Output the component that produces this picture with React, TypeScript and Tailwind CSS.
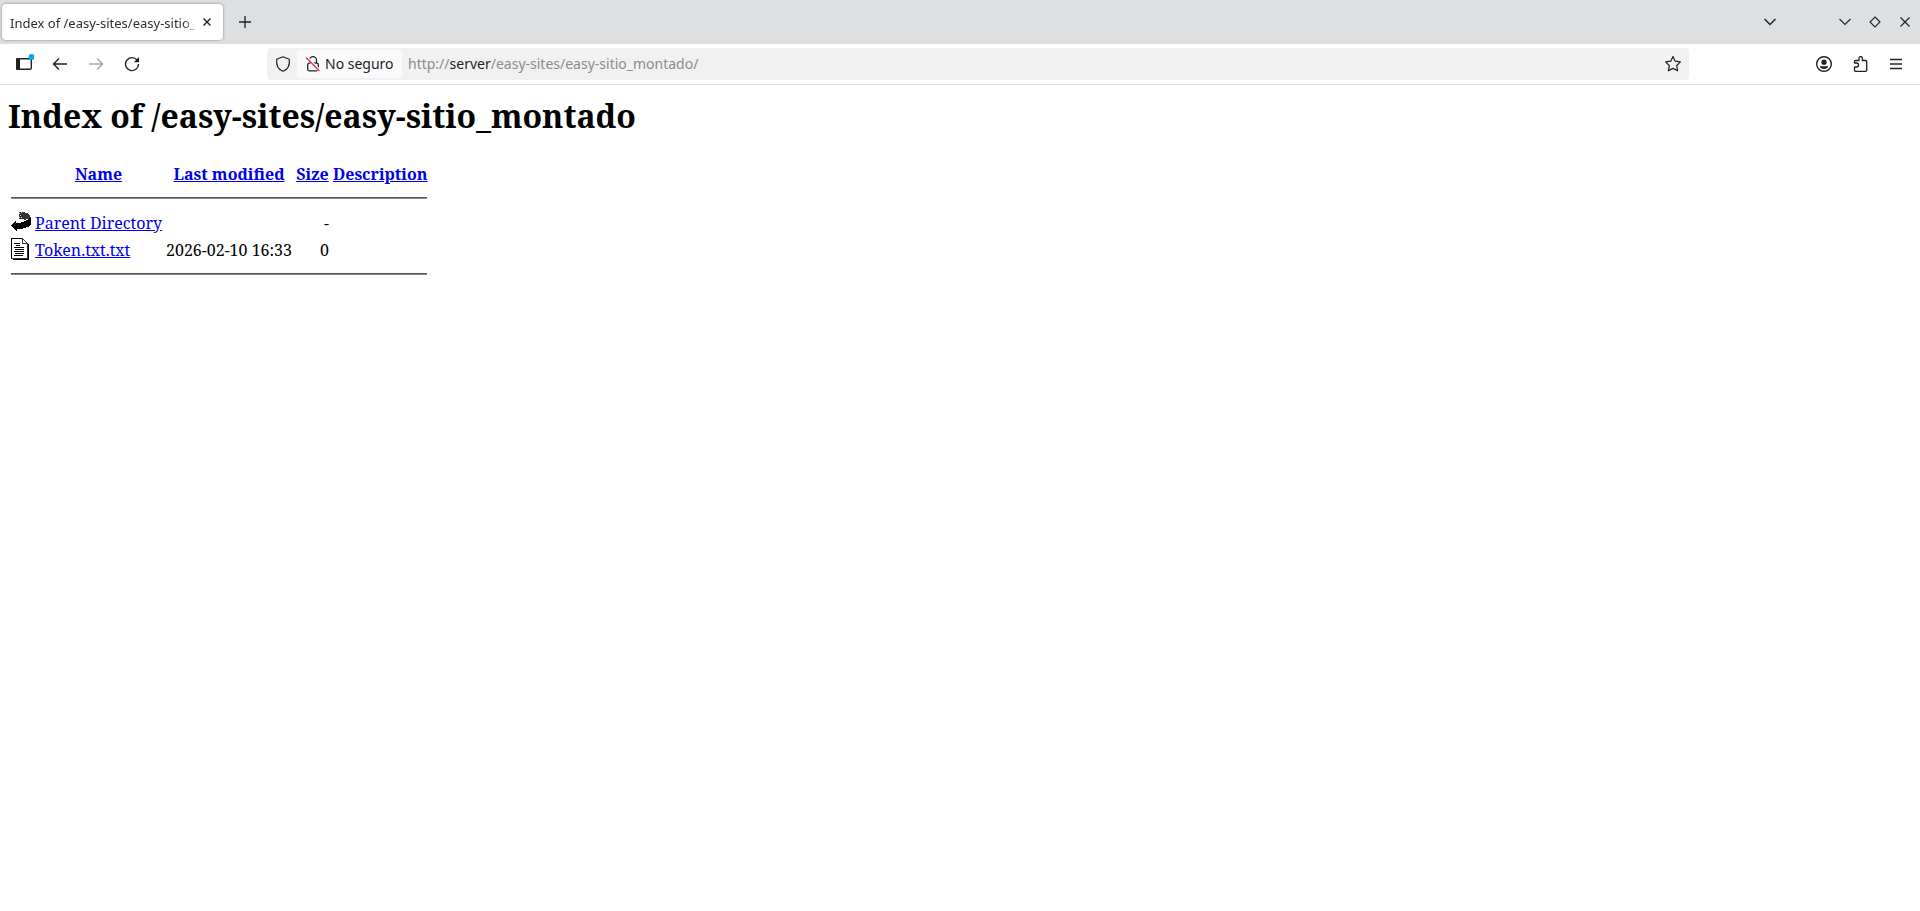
import type { ReactNode } from "react";

type Entry = {
  icon: ReactNode;
  name: string;
  modified: string;
  size: string;
};

function BackIcon() {
  return (
    <svg width="20" height="22" viewBox="0 0 20 22" className="block" shapeRendering="crispEdges">
      <path d="M8 1h4l4 1 3 2 1 3-7 2-1-1H8z" fill="#333" />
      <path d="M8 2h1v1H8zM9 4h1v1H9zM8 6h1v1H8zM10 1h1v1h-1zM10 6h1v1h-1z" fill="#ccc" />
      <path d="M0 14.500l5-4.500v2c5 0 10-1 14-5.500h1v7c-3 3.500-8 4.500-14 4.500v2z" fill="#000" />
    </svg>
  );
}

function TextIcon() {
  return (
    <svg width="20" height="22" viewBox="0 0 20 22" className="block" shapeRendering="crispEdges">
      <path d="M0 0h12v1H1v20H0z" fill="#000" />
      <path d="M11 0h1v5h5v1h-6zM12 1h1v1h-1zM13 2h1v1h-1zM14 3h1v1h-1zM15 4h1v1h-1zM16 5h1v16h-1z" fill="#333" />
      <path d="M17 6h1v16H2v-1h15z" fill="#000" />
      <path d="M0 20h17v1H0z" fill="#333" />
      <path d="M3 5h6v1H3zM5 7h4v1H5zM3 9h10v1H3zM4 11h9v1H4zM3 13h10v1H3zM4 15h9v1H4zM3 17h9v1H3z" fill="#000" />
    </svg>
  );
}

export default function App() {
  const entries: Entry[] = [
    { icon: <BackIcon />, name: "Parent Directory", modified: "", size: "-" },
    { icon: <TextIcon />, name: "Token.txt.txt", modified: "2026-02-10 16:33", size: "0" },
  ];

  const columns = ["Name", "Last modified", "Size", "Description"];

  const iconButton = "flex h-8 w-9 shrink-0 items-center justify-center";

  return (
    <div className="min-h-screen bg-white font-['Noto_Sans',sans-serif] text-[#1f2124]">

      {/* Tab strip */}

      <header className="flex h-11 items-center bg-[#dedfe1] pl-0.5 pr-0">
        <div className="flex h-9 w-[221px] items-center rounded-[4px] bg-white pl-2 pr-2 shadow-[0_0_3px_rgba(0,0,0,0.4)]">
          <span className="flex-1 overflow-hidden whitespace-nowrap pt-1 text-[13px] text-[#2c2e31] [mask-image:linear-gradient(to_left,transparent,black_16px)]">
            Index of /easy-sites/easy-sitio_
          </span>
          <button aria-label="Close tab" className="flex h-6 w-4 items-center justify-center">
            <svg width="8" height="8" viewBox="0 0 8 8" fill="none" stroke="currentColor" strokeWidth="1.4">
              <path d="M.5.5l7 7M7.5.5l-7 7" />
            </svg>
          </button>
        </div>

        <button aria-label="New tab" className="ml-1 flex h-9 w-9 items-center justify-center">
          <svg width="12" height="12" viewBox="0 0 12 12" fill="none" stroke="currentColor" strokeWidth="1.3">
            <path d="M6 0v12M0 6h12" />
          </svg>
        </button>

        <div className="flex-1" />

        <button aria-label="List all tabs" className="mr-[45px] flex h-8 w-[30px] items-center justify-center">
          <svg width="12" height="8" viewBox="0 0 12 8" fill="none" stroke="currentColor" strokeWidth="1.5">
            <path d="M.5 1L6 6.5 11.5 1" />
          </svg>
        </button>
        <button aria-label="Minimize" className="flex h-8 w-[30px] items-center justify-center">
          <svg width="12" height="8" viewBox="0 0 12 8" fill="none" stroke="currentColor" strokeWidth="1.1">
            <path d="M.5 1L6 6.5 11.5 1" />
          </svg>
        </button>
        <button aria-label="Maximize" className="flex h-8 w-[30px] items-center justify-center">
          <svg width="12" height="12" viewBox="0 0 12 12" fill="none" stroke="currentColor" strokeWidth="1.1">
            <path d="M6 1l5 5-5 5-5-5z" />
          </svg>
        </button>
        <button aria-label="Close" className="flex h-8 w-[30px] items-center justify-center">
          <svg width="10" height="10" viewBox="0 0 10 10" fill="none" stroke="currentColor" strokeWidth="1.2">
            <path d="M.5.5l9 9M9.5.5l-9 9" />
          </svg>
        </button>
      </header>

      {/* Toolbar */}

      <nav className="flex items-center border-b border-[#e0e0e1] bg-white px-1.5 py-1">
        <button aria-label="Sidebars" className={iconButton}>
          <svg width="20" height="20" viewBox="0 0 20 20" fill="none">
            <rect x="2.7" y="4.7" width="14.6" height="10.6" rx="1.5" stroke="currentColor" strokeWidth="1.4" />
            <path d="M3 4h3v12H3a1 1 0 01-1-1V5a1 1 0 011-1z" fill="currentColor" />
            <circle cx="17.500" cy="3" r="3" fill="#00a8f5" />
          </svg>
        </button>
        <button aria-label="Back" className={iconButton}>
          <svg width="16" height="16" viewBox="0 0 16 16" fill="none" stroke="currentColor" strokeWidth="1.4">
            <path d="M15 8H2M7 2.500L1.500 8 7 13.500" />
          </svg>
        </button>
        <button aria-label="Forward" disabled className={iconButton + " text-[#a5a6a7]"}>
          <svg width="16" height="16" viewBox="0 0 16 16" fill="none" stroke="currentColor" strokeWidth="1.4">
            <path d="M1 8h13M9 2.500L14.500 8 9 13.500" />
          </svg>
        </button>
        <button aria-label="Reload" className={iconButton}>
          <svg width="16" height="16" viewBox="0 0 16 16" fill="none">
            <path d="M13.2 4.2A6.5 6.5 0 1014.5 8" stroke="currentColor" strokeWidth="1.4" />
            <path d="M15 1v5.2H9.8z" fill="currentColor" />
          </svg>
        </button>

        <div className="max-w-[117px] flex-1" />

        <div className="flex h-8 flex-[12] items-center rounded-[4px] bg-[#f1f1f1] text-sm">
          <button aria-label="Tracking protection" className="flex h-8 w-[30px] shrink-0 items-center justify-center pl-0.5">
            <svg width="16" height="16" viewBox="0 0 16 16" fill="none" stroke="currentColor" strokeWidth="1.2">
              <path d="M8 .8L14.3 3.2c.6 5.6-1.2 10.2-6.3 12.1C2.900 13.400 1.100 8.800 1.700 3.200z" strokeLinejoin="round" />
            </svg>
          </button>
          <button className="flex h-7 w-[105px] shrink-0 items-center gap-1 rounded-[3px] bg-[#fafafb] pl-2 whitespace-nowrap">
            <svg width="16" height="16" viewBox="0 0 16 16" fill="none">
              <path d="M4.500 7V4.200a3.500 3.500 0 017 0V7" stroke="currentColor" strokeWidth="1.3" />
              <rect x="2.700" y="7.200" width="10.600" height="7.600" rx="1.500" stroke="currentColor" strokeWidth="1.300" />
              <path d="M1.500 1.500l13 13" stroke="#fafafb" strokeWidth="3" />
              <path d="M1 1.500l13.500 13.500" stroke="#e22850" strokeWidth="1.300" />
            </svg>
            No seguro
          </button>
          <a href="#url" className="ml-1.5 flex-1 whitespace-nowrap text-[#8b8c8d]">
            http://<span className="text-[#1f2124]">server</span>/easy-sites/easy-sitio_montado/
          </a>
          <button aria-label="Bookmark this page" className="flex h-8 w-8 shrink-0 items-center justify-center">
            <svg width="16" height="16" viewBox="0 0 16 16" fill="none" stroke="currentColor" strokeWidth="1.2" strokeLinejoin="round">
              <path d="M8 .6l2.200 4.600 5.200.7-3.700 3.600.9 5.300L8 12.400l-4.600 2.400.9-5.300L.6 5.900l5.200-.7z" />
            </svg>
          </button>
        </div>

        <div className="max-w-[117px] flex-1" />

        <button aria-label="Account" className={iconButton}>
          <svg width="16" height="16" viewBox="0 0 16 16" fill="none">
            <circle cx="8" cy="8" r="7.300" stroke="currentColor" strokeWidth="1.400" />
            <circle cx="8" cy="6.200" r="2.600" fill="currentColor" />
            <path d="M4 10.200h8v.800c-.8 1.200-2.200 2-4 2s-3.200-.8-4-2z" fill="currentColor" />
          </svg>
        </button>
        <button aria-label="Extensions" className={iconButton}>
          <svg width="16" height="16" viewBox="0 0 16 16" fill="none" stroke="currentColor" strokeWidth="1.300" strokeLinejoin="round">
            <path d="M2.500 7V5.500a1 1 0 011-1H7V2.300a1.700 1.700 0 013.400 0v2.200h3.300a1 1 0 011 1v8.800a1 1 0 01-1 1H3.500a1 1 0 01-1-1V11h2a2 2 0 000-4z" />
          </svg>
        </button>
        <button aria-label="Open application menu" className={iconButton}>
          <svg width="12" height="12" viewBox="0 0 12 12" fill="none" stroke="currentColor" strokeWidth="1.300">
            <path d="M0 1.500h12M0 6h12M0 10.500h12" />
          </svg>
        </button>
      </nav>

      {/* Directory listing */}

      <main className="px-2 py-[9px] font-['Noto_Serif','DejaVu_Serif_Condensed','Liberation_Serif',serif] text-base/[22px] text-black">
        <h1 className="mb-[21px] text-[32px]/[44px] font-bold">Index of /easy-sites/easy-sitio_montado</h1>

        <table className="table-fixed w-[422px] border-separate border-spacing-[2px] whitespace-nowrap">
          <colgroup>
            <col className="w-[22px]" />
            <col className="w-[129px]" />
            <col className="w-[128px]" />
            <col className="w-[35px]" />
            <col className="w-[96px]" />
          </colgroup>
          <thead>
            <tr className="h-[25px]">
              <th className="p-px" />
              {columns.map((column) => (
                <th key={column} className="p-px text-center font-bold">
                  <a href="#sort" className="text-[#0000ee] underline">{column}</a>
                </th>
              ))}
            </tr>
            <tr>
              <th colSpan={5} className="p-px">
                <hr className="my-2 h-0.5 border-t border-b border-t-[#555] border-b-[#888]" />
              </th>
            </tr>
          </thead>
          <tbody>
            {entries.map((entry) => (
              <tr key={entry.name} className="h-[25px]">
                <td className="p-px align-top">{entry.icon}</td>
                <td className="p-px">
                  <a href="#entry" className="text-[#0000ee] underline">{entry.name}</a>
                </td>
                <td className="p-px text-right">{entry.modified}</td>
                <td className="p-px text-right">{entry.size}</td>
                <td className="p-px" />
              </tr>
            ))}
            <tr>
              <td colSpan={5} className="p-px">
                <hr className="my-2 h-0.5 border-t border-b border-t-[#555] border-b-[#888]" />
              </td>
            </tr>
          </tbody>
        </table>
      </main>

    </div>
  );
}
